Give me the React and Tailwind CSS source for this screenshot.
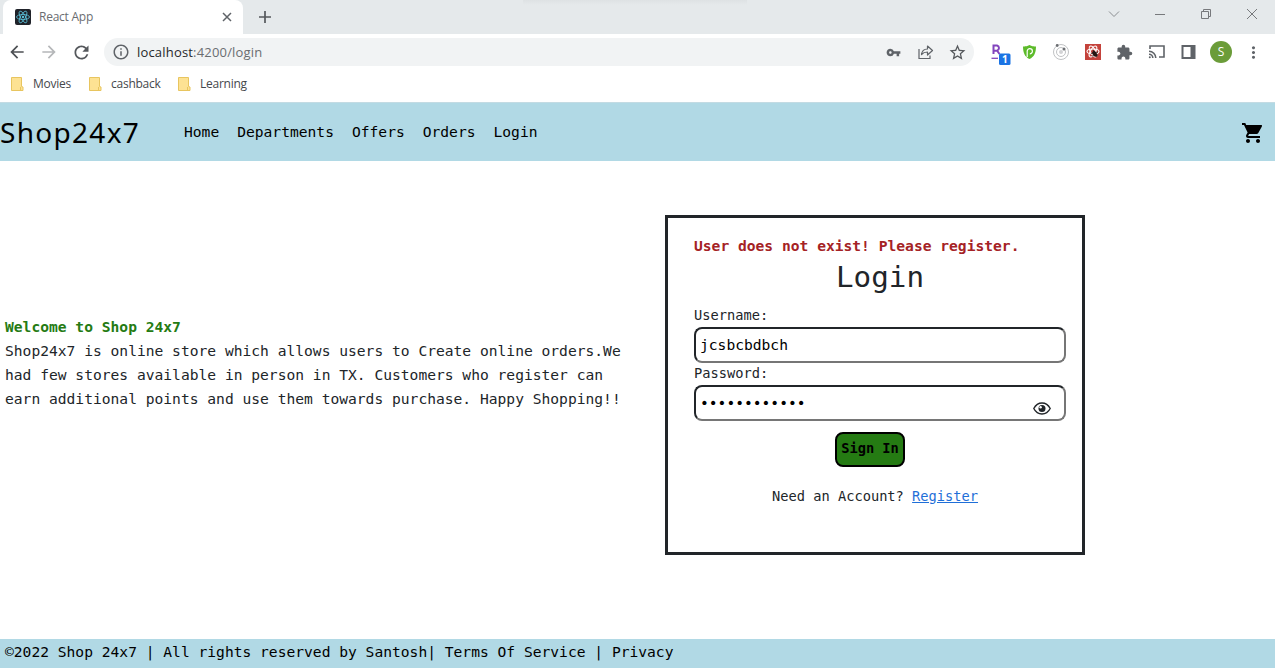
import React from 'react';
import {
  MdShoppingCart, MdVpnKey, MdExtension, MdStarBorder,
  MdRefresh, MdArrowBack, MdArrowForward, MdInfoOutline, MdMoreVert,
} from 'react-icons/md';

function ReactLogo() {
  return (
    <svg width="16" height="16" viewBox="0 0 16 16" fill="none" stroke="#5cc4dc" strokeWidth="0.8">
      <rect width="16" height="16" rx="2" fill="#20232a" stroke="none" />
      <ellipse cx="8" cy="8" rx="6.5" ry="2.5" />
      <ellipse cx="8" cy="8" rx="6.5" ry="2.5" transform="rotate(60 8 8)" />
      <ellipse cx="8" cy="8" rx="6.5" ry="2.5" transform="rotate(120 8 8)" />
      <circle cx="8" cy="8" r="1.2" fill="#5cc4dc" stroke="none" />
    </svg>
  );
}

function TabStrip() {
  return (
    <div className="flex h-[34px] bg-[#e5e9eb]">
      <div className="w-[3px]" />
      <div className="flex h-full w-[240px] items-center rounded-t-lg bg-white pl-[12px] pr-[11px]">
        <ReactLogo />
        <span className="ml-2 w-[56px] text-[12px] leading-4 tracking-[-0.25px] whitespace-nowrap text-[#6a6d71]">React App</span>
        <svg className="ml-auto" width="10" height="10" viewBox="0 0 10 10" stroke="#5f6368" strokeWidth="1.5"><path d="M1 1l8 8M9 1L1 9" /></svg>
      </div>
      <div className="flex w-[44px] items-center justify-center">
        <svg width="12" height="12" viewBox="0 0 12 12" stroke="#55585c" strokeWidth="1.7"><path d="M6 0v12M0 6h12" /></svg>
      </div>
      <div className="flex-1 pl-[236px]">
        <div className="h-[5px] w-[224px] bg-linear-to-b from-[#dee2e4] to-[#e5e9eb]" />
      </div>
      <div className="flex w-[167px] justify-between pt-[8px] pr-[17px]">
        <svg width="12" height="12" viewBox="0 0 12 12" fill="none" stroke="#8b8e91"><path d="M1 3.5l5 5 5-5" /></svg>
        <svg width="12" height="12" viewBox="0 0 12 12" stroke="#77797c"><path d="M1 6.5h10" /></svg>
        <svg width="12" height="12" viewBox="0 0 12 12" fill="none" stroke="#77797c"><path d="M1.500 3.500h7v7h-7zM3.500 3.500v-2h7v7h-2" /></svg>
        <svg width="12" height="12" viewBox="0 0 12 12" stroke="#77797c"><path d="M1 1l10 10M11 1L1 11" /></svg>
      </div>
    </div>
  );
}

function Extensions() {
  return (
    <div className="ml-[15px] flex items-center">
      <svg width="24" height="26" viewBox="0 0 24 26">
        <path d="M4.500 15V6.500H8a2.700 2.700 0 0 1 0 5.200H5M8 11.500l2.500 3.500" fill="none" stroke="#8244bd" strokeWidth="2" />
        <path d="M2.500 19.300h6.500" stroke="#8244bd" strokeWidth="1.300" />
        <rect x="10" y="14.500" width="11.500" height="11.500" rx="1.500" fill="#1b74e4" />
        <text x="15.800" y="24" textAnchor="middle" fontSize="10" fontWeight="700" fill="white" fontFamily="Open Sans, sans-serif">1</text>
      </svg>
      <svg className="ml-[10px]" width="13" height="14" viewBox="0 0 13 14">
        <path d="M0 1.500C4 1.500 5 .5 6.500 0 8 .5 9 1.500 13 1.500 13 8 11 12 6.500 14 2 12 0 8 0 1.500z" fill="#5dbb2b" />
        <path d="M4.200 12V6.200a2.600 2.600 0 1 1 2.600 2.600" fill="none" stroke="white" strokeWidth="1.200" />
      </svg>
      <svg className="ml-[16px]" width="18" height="18" viewBox="0 0 18 18" fill="none" stroke="#c0c2c4">
        <circle cx="9" cy="9" r="7.500" /><circle cx="9" cy="9" r="4.500" />
        <circle cx="9" cy="9" r="2" fill="#d2d3d5" stroke="none" />
        <circle cx="5.200" cy="2.500" r="1.400" fill="#6b6e72" stroke="none" />
        <circle cx="12" cy="6" r="1.500" fill="#6b6e72" stroke="none" />
      </svg>
      <svg className="ml-[15px]" width="16" height="16" viewBox="0 0 16 16" fill="none" stroke="white" strokeWidth="1.100">
        <rect width="16" height="16" fill="#c4423b" stroke="none" />
        <ellipse cx="8" cy="7.500" rx="6" ry="2.500" />
        <ellipse cx="8" cy="7.500" rx="6" ry="2.500" transform="rotate(60 8 7.500)" />
        <ellipse cx="8" cy="7.500" rx="6" ry="2.500" transform="rotate(120 8 7.500)" />
        <ellipse cx="9.800" cy="9.800" rx="2" ry="3.200" fill="#241512" stroke="none" transform="rotate(-35 9.800 9.800)" />
        <path d="M6 9.500l7-1.500M7 12l6-1M8 6l4 7" stroke="#241512" strokeWidth="0.800" />
      </svg>
      <MdExtension className="ml-[15px]" size={17} color="#5f6368" />
      <svg className="ml-[15px]" width="18" height="16" viewBox="0 0 18 16" fill="none" stroke="#5f6368" strokeWidth="1.600">
        <path d="M2 5V2h14v11h-5" /><path d="M1 7.200a6.800 6.800 0 0 1 6.800 6.800M1 10.200A3.800 3.800 0 0 1 4.800 14" />
        <circle cx="1.800" cy="13.200" r="1" fill="#5f6368" stroke="none" />
      </svg>
      <svg className="ml-[15px]" width="15" height="14" viewBox="0 0 15 14"><path fillRule="evenodd" fill="#5f6368" d="M.5 0h14v14H.5zM2.500 2v10h7V2z" /></svg>
      <span className="ml-[14px] flex size-[22px] items-center justify-center rounded-full bg-[#6b9c39] text-[12px] text-white">S</span>
      <MdMoreVert className="ml-[12px]" size={19} color="#5f6368" />
    </div>
  );
}

function AddressBar() {
  return (
    <div className="flex h-[36px] items-center bg-white pl-[7px]">
      <MdArrowBack size={20} color="#4d5054" />
      <MdArrowForward className="ml-[12px]" size={20} color="#b5b7b9" />
      <MdRefresh className="ml-[12px]" size={21} color="#55585c" />
      <div className="ml-[12px] flex h-[28px] w-[870px] items-center rounded-full bg-[#f1f3f4] pl-[8px] pr-[7px]">
        <MdInfoOutline size={18} color="#5f6368" />
        <span className="mt-[2px] ml-[7px] text-[13px] tracking-[0.18px] whitespace-nowrap text-[#6a6d71]"><span className="text-[#26282b]">localhost</span>:4200/login</span>
        <div className="ml-auto flex items-center">
          <MdVpnKey size={15} color="#5f6368" />
          <svg className="ml-[16px]" width="17" height="16" viewBox="0 0 17 16" fill="none" stroke="#5f6368" strokeWidth="1.200">
            <path d="M2 5v9.500h11v-3" />
            <path d="M4.500 10.500c.5-4 3-5.500 6-5.500V2l5 4.500-5 4.500V8c-3 0-4.500.7-6 2.500z" strokeLinejoin="round" />
          </svg>
          <MdStarBorder className="ml-[14px]" size={19} color="#55585c" />
        </div>
      </div>
      <Extensions />
    </div>
  );
}

function Bookmark({ label, className }) {
  return (
    <div className={`flex items-center ${className}`}>
      <svg width="13" height="14" viewBox="0 0 13 14"><path d="M.5.5h10v9l1.500.5v3.500H.5z" fill="#fde293" stroke="#e8c55f" /><path d="M9.500 13v-3" stroke="#e8c55f" /></svg>
      <span className="ml-[9px] text-[12px] tracking-[-0.25px] whitespace-nowrap text-[#45484c]">{label}</span>
    </div>
  );
}

function Header() {
  return (
    <header className="flex h-[59px] items-center border-t border-[#c3dbe3] bg-[#b1d9e5] text-black">
      <div className="w-[184px] font-['Noto_Sans',sans-serif] text-[28px] leading-[58px] tracking-[1.3px]">Shop24x7</div>
      <nav className="flex flex-1 gap-[18px] text-[14.61px]">
        <a>Home</a><a>Departments</a><a>Offers</a><a>Orders</a><a>Login</a>
      </nav>
      <MdShoppingCart className="mt-[2px] mr-[10px]" size={24} />
    </header>
  );
}

function EyeIcon() {
  return (
    <svg className="mt-[11px] ml-auto" width="18" height="13" viewBox="0 0 18 13" fill="none" stroke="#212529" strokeWidth="1.400">
      <path d="M.8 6.500C2.600 3 5.500 1 9 1s6.400 2 8.200 5.500C15.400 10 12.500 12 9 12S2.600 10 .8 6.500z" />
      <circle cx="9" cy="6.500" r="3.500" fill="#212529" stroke="none" />
      <circle cx="7.600" cy="5.200" r="1.200" fill="white" stroke="none" />
    </svg>
  );
}

const field = 'flex h-[36px] w-[372px] items-center rounded-[8px] border-2 border-t-[#212529] border-l-[#212529] border-r-[#767676] border-b-[#767676] pl-[4px] pr-[13px] text-black';

function LoginCard() {
  return (
    <section className="mt-[54px] h-[340px] w-[420px] border-[3px] border-[#212529] pl-[26px] pt-[16px] leading-6">
      <p className="font-bold text-[#a52225]">User does not exist! Please register.</p>
      <h1 className="h-[47px] w-[372px] text-center text-[29.23px] leading-[38px]">Login</h1>
      <div className="h-[22px] text-[13.7px] leading-[20px]">Username:</div>
      <div className={field}>jcsbcbdbch</div>
      <div className="h-[22px] text-[13.7px] leading-[20px]">Password:</div>
      <div className={field}>
        <span>••••••••••••</span>
        <EyeIcon />
      </div>
      <button className="mt-[11px] ml-[141px] block h-[35px] w-[70px] rounded-[8px] border-2 border-black bg-[#257b13] pb-[2px] text-[13.7px] leading-[29px] font-bold whitespace-nowrap text-black">Sign In</button>
      <p className="mt-[17px] ml-[78px] text-[13.7px]">Need an Account? <a className="text-[#1f6fd8] underline">Register</a></p>
    </section>
  );
}

export default function App() {
  return (
    <div className="flex h-[668px] w-[1275px] flex-col overflow-hidden bg-white font-['Open_Sans','Noto_Sans',sans-serif]">
      <TabStrip />
      <AddressBar />
      <div className="flex h-[32px] items-center pb-[4px] pl-[11px]">
        <Bookmark label="Movies" className="w-[78px]" />
        <Bookmark label="cashback" className="w-[89px]" />
        <Bookmark label="Learning" className="w-[80px]" />
      </div>
      <div className="flex flex-1 flex-col font-['DejaVu_Sans_Mono',monospace] text-[14.61px] text-[#212529]">
        <Header />
        <main className="flex flex-1">
          <div className="w-[665px] pt-[154px] pl-[5px] leading-6 whitespace-nowrap">
            <p className="font-bold text-[#257b13]">Welcome to Shop 24x7</p>
            <p>Shop24x7 is online store which allows users to Create online orders.We<br />had few stores available in person in TX. Customers who register can<br />earn additional points and use them towards purchase. Happy Shopping!!</p>
          </div>
          <LoginCard />
        </main>
        <footer className="h-[29px] bg-[#b1d9e5] pl-[5px] leading-[26px] whitespace-pre text-black">©2022 Shop 24x7 | All rights reserved by Santosh| Terms Of Service | Privacy</footer>
      </div>
    </div>
  );
}
